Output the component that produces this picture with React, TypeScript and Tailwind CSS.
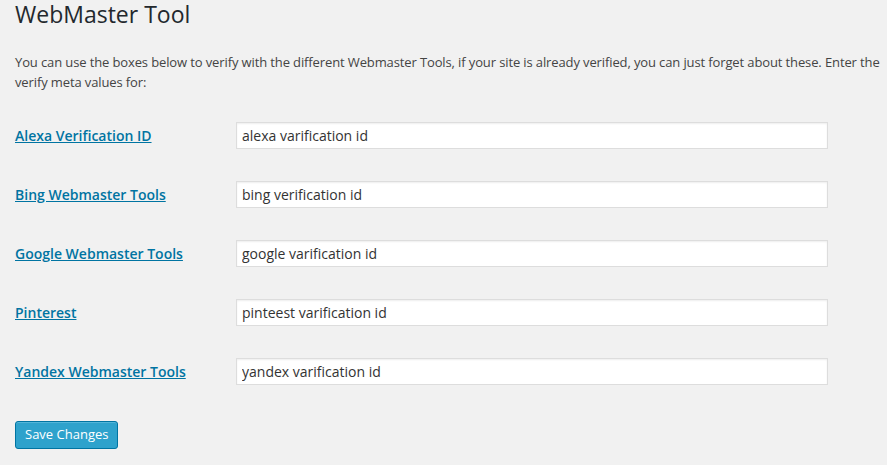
import { useState } from "react"

const fields = [
  { label: "Alexa Verification ID", value: "alexa varification id" },
  { label: "Bing Webmaster Tools", value: "bing verification id" },
  { label: "Google Webmaster Tools", value: "google varification id" },
  { label: "Pinterest", value: "pinteest varification id" },
  { label: "Yandex Webmaster Tools", value: "yandex varification id" },
]

export default function App() {
  const [values, setValues] = useState(fields.map(f => f.value))

  return (
    <div className="min-h-screen bg-[#f1f1f1] pl-[15px] pr-[4px] font-['Open_Sans',sans-serif] text-[#444]">
      <h1 className="text-[23px] leading-[29px] font-normal text-[#23282d]">WebMaster Tool</h1>
      <p className="mt-[24px] text-[13px] leading-[19.5px] tracking-[-0.12px]">
        You can use the boxes below to verify with the different Webmaster Tools, if your site is already verified, you can just forget about these. Enter the verify meta values for:
      </p>

      <div className="mt-[14px]">
        {fields.map((f, i) => (
          <div key={f.label} className="flex items-center py-4">
            <div className="w-[221px] shrink-0 -mt-[2px]">
              <a href="#" className="text-[14px] font-semibold text-[#0074a2] underline">
                {f.label}
              </a>
            </div>
            <input
              className="h-[27px] w-[592px] border border-[#ddd] bg-white px-[5px] text-[14px] text-[#333] shadow-[inset_0_1px_2px_rgba(0,0,0,0.07)] outline-none"
              value={values[i]}
              onChange={e => {
                const next = [...values]
                next[i] = e.target.value
                setValues(next)
              }}
            />
          </div>
        ))}
      </div>

      <button className="mt-[20px] h-[28px] rounded-[3px] border border-[#0074a2] bg-[#2ea2cc] px-[9px] text-[13px] text-white shadow-[inset_0_1px_0_rgba(120,200,230,0.5)]">
        Save Changes
      </button>
    </div>
  )
}
